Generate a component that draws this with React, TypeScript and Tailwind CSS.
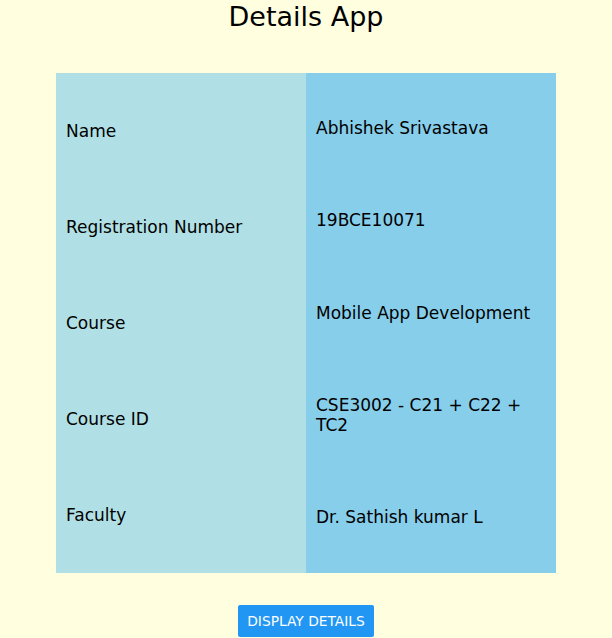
import React from "react";

const labels = ["Name", "Registration Number", "Course", "Course ID", "Faculty"];
const values = [
  "Abhishek Srivastava",
  "19BCE10071",
  "Mobile App Development",
  "CSE3002 - C21 + C22 + TC2",
  "Dr. Sathish kumar L",
];

export default function App() {
  return (
    <div
      className="w-[612px] h-[638px] bg-[#ffffe0] flex flex-col items-center overflow-hidden text-black"
      style={{ fontFamily: '"DejaVu Sans", sans-serif' }}
    >
      <div className="mt-[1px] h-[31px] text-[27px] leading-[31px]">Details App</div>
      <div className="mt-[41px] flex w-[500px] h-[500px]">
        <div className="w-[250px] bg-[#b0e0e6] flex flex-col justify-between pt-[48px] pb-[48px] pl-[10px]">
          {labels.map((l) => (
            <div key={l} className="text-[17px] leading-[20px]">
              {l}
            </div>
          ))}
        </div>
        <div className="w-[250px] bg-[#87ceeb] flex flex-col justify-between pt-[45px] pb-[46px] pl-[10px] pr-[10px]">
          {values.map((v) => (
            <div key={v} className="text-[17px] leading-[20px]">
              {v}
            </div>
          ))}
        </div>
      </div>
      <button className="mt-[32px] h-[32px] w-[136px] bg-[#2196f3] text-white rounded-[2px] text-[13.8px] leading-[32px] flex items-center justify-center">
        DISPLAY DETAILS
      </button>
    </div>
  );
}
